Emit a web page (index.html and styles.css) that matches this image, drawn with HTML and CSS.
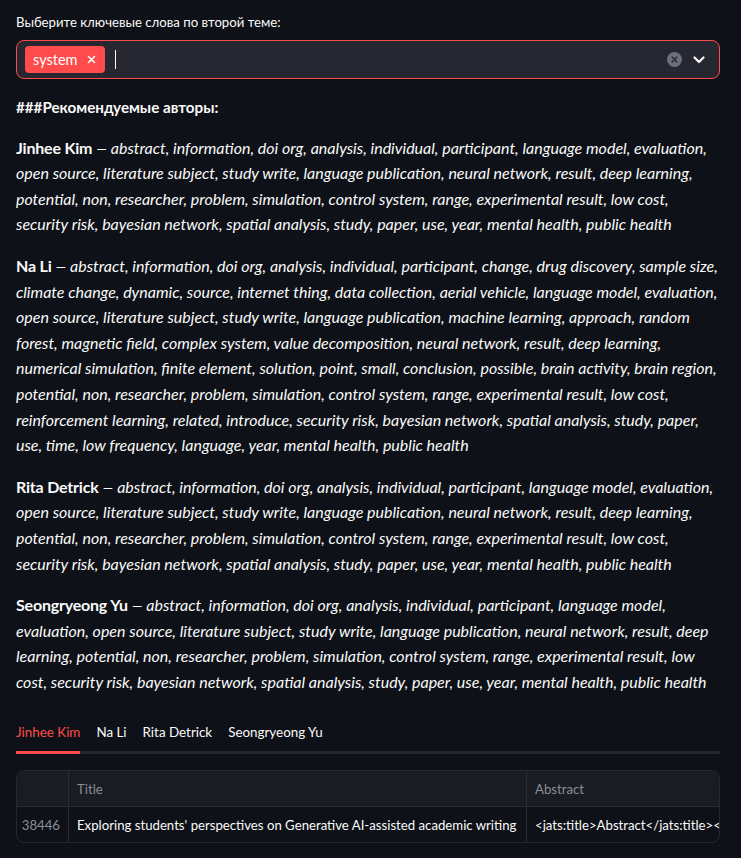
FILE: index.html
```html
<!DOCTYPE html>
<html lang="ru">
<head>
<meta charset="utf-8">
<link rel="stylesheet" href="styles.css">
</head>
<body>
<main class="main">
  <div class="field">
    <label class="field-label">Выберите ключевые слова по второй теме:</label>
    <div class="select">
      <div class="select-values">
        <span class="tag">system <span class="tag-x">
          <svg width="9" height="9" viewBox="0 0 9 9"><path d="M1.5 1.5l6 6M7.5 1.5l-6 6" stroke="#fff" stroke-width="1.6" stroke-linecap="round"/></svg>
        </span></span>
        <span class="caret"></span>
      </div>
      <div class="select-icons">
        <svg class="clear" width="15" height="15" viewBox="0 0 15 15"><circle cx="7.5" cy="7.5" r="7.5" fill="#6f707c"/><path d="M5.2 5.2l4.6 4.6M9.8 5.2l-4.6 4.6" stroke="#31333f" stroke-width="1.7" stroke-linecap="round"/></svg>
        <svg class="chev" width="12" height="8" viewBox="0 0 12 8"><path d="M1.5 1.5L6 6l4.5-4.5" fill="none" stroke="#fafafa" stroke-width="2.2" stroke-linecap="round" stroke-linejoin="round"/></svg>
      </div>
    </div>
  </div>

  <p class="md heading"><strong>###Рекомендуемые авторы:</strong></p>

  <p class="md"><strong class="name">Jinhee Kim</strong> <span class="dash">—</span> <em>abstract, information, doi org, analysis, individual, participant, language model, evaluation, open source, literature subject, study write, language publication, neural network, result, deep learning, potential, non, researcher, problem, simulation, control system, range, experimental result, low cost, security risk, bayesian network, spatial analysis, study, paper, use, year, mental health, public health</em></p>

  <p class="md"><strong class="name">Na Li</strong> <span class="dash">—</span> <em>abstract, information, doi org, analysis, individual, participant, change, drug discovery, sample size, climate change, dynamic, source, internet thing, data collection, aerial vehicle, language model, evaluation, open source, literature subject, study write, language publication, machine learning, approach, random forest, magnetic field, complex system, value decomposition, neural network, result, deep learning, numerical simulation, finite element, solution, point, small, conclusion, possible, brain activity, brain region, potential, non, researcher, problem, simulation, control system, range, experimental result, low cost, reinforcement learning, related, introduce, security risk, bayesian network, spatial analysis, study, paper, use, time, low frequency, language, year, mental health, public health</em></p>

  <p class="md"><strong class="name">Rita Detrick</strong> <span class="dash">—</span> <em>abstract, information, doi org, analysis, individual, participant, language model, evaluation, open source, literature subject, study write, language publication, neural network, result, deep learning, potential, non, researcher, problem, simulation, control system, range, experimental result, low cost, security risk, bayesian network, spatial analysis, study, paper, use, year, mental health, public health</em></p>

  <p class="md"><strong class="name">Seongryeong Yu</strong> <span class="dash">—</span> <em>abstract, information, doi org, analysis, individual, participant, language model, evaluation, open source, literature subject, study write, language publication, neural network, result, deep learning, potential, non, researcher, problem, simulation, control system, range, experimental result, low cost, security risk, bayesian network, spatial analysis, study, paper, use, year, mental health, public health</em></p>

  <div class="tabs">
    <div class="tab active">Jinhee Kim</div>
    <div class="tab">Na Li</div>
    <div class="tab">Rita Detrick</div>
    <div class="tab">Seongryeong Yu</div>
  </div>

  <div class="table">
    <div class="row head">
      <div class="cell idx"></div>
      <div class="cell title">Title</div>
      <div class="cell abs">Abstract</div>
    </div>
    <div class="row">
      <div class="cell idx num">38446</div>
      <div class="cell title">Exploring students' perspectives on Generative AI-assisted academic writing</div>
      <div class="cell abs">&lt;jats:title&gt;Abstract&lt;/jats:title&gt;&lt;jats:p&gt;</div>
    </div>
  </div>
</main>
</body>
</html>
```
FILE: styles.css
```css
html, body {
  margin: 0;
  background: #0e1117;
}
body {
  color: #fafafa;
  font-family: Lato, "Noto Sans", sans-serif;
  font-size: 16px;
  overflow: hidden;
}
.main {
  width: 704px;
  padding: 12px 21px 0 16px;
}
.field-label {
  display: block;
  font-size: 13.2px;
  line-height: 20px;
  margin-bottom: 8px;
}
.select {
  height: 37px;
  border: 1px solid #ff4b4b;
  border-radius: 8px;
  background: #262730;
  display: flex;
  align-items: center;
  justify-content: space-between;
  padding: 0 8px;
}
.select-values {
  display: flex;
  align-items: center;
  gap: 10px;
}
.tag {
  display: inline-flex;
  align-items: center;
  height: 27px;
  padding: 0 9px 0 8px;
  background: #ff4b4b;
  border-radius: 4px;
  font-size: 14.5px;
  color: #fff;
  gap: 9px;
}
.tag-x { display: flex; }
.caret {
  width: 1px;
  height: 19px;
  background: #fafafa;
}
.select-icons {
  display: flex;
  align-items: center;
  gap: 11px;
  padding-right: 6px;
}
.clear, .chev { display: block; }
.md {
  margin: 0 0 16px;
  line-height: 25.6px;
}
.md .name { letter-spacing: -0.2px; }
.md .dash {
  font-size: 13px;
  line-height: 1;
}
.md.heading {
  margin: 16px 0 14px;
  font-size: 15.2px;
}
.tabs {
  display: flex;
  gap: 16px;
  margin-top: 21px;
  border-bottom: 3px solid #262730;
  font-size: 13.4px;
}
.tab {
  padding: 7px 0 9px;
  margin-bottom: -3px;
  border-bottom: 3px solid transparent;
  line-height: 20px;
}
.tab.active {
  color: #ff4b4b;
  border-bottom-color: #ff4b4b;
}
.table {
  margin-top: 16px;
  border: 1px solid #262730;
  border-radius: 8px;
  overflow: hidden;
  font-size: 13.2px;
}
.row {
  display: grid;
  grid-template-columns: 52px 458px 1fr;
  height: 35px;
}
.row.head {
  background: #1a1c24;
  border-bottom: 1px solid #2b2d36;
  color: #8b8d96;
}
.cell {
  display: flex;
  align-items: center;
  padding: 0 8px;
  white-space: nowrap;
  overflow: hidden;
  border-right: 1px solid #2b2d36;
}
.cell.abs { border-right: 0; }
.num {
  justify-content: flex-end;
  color: #8b8d96;
}
```
